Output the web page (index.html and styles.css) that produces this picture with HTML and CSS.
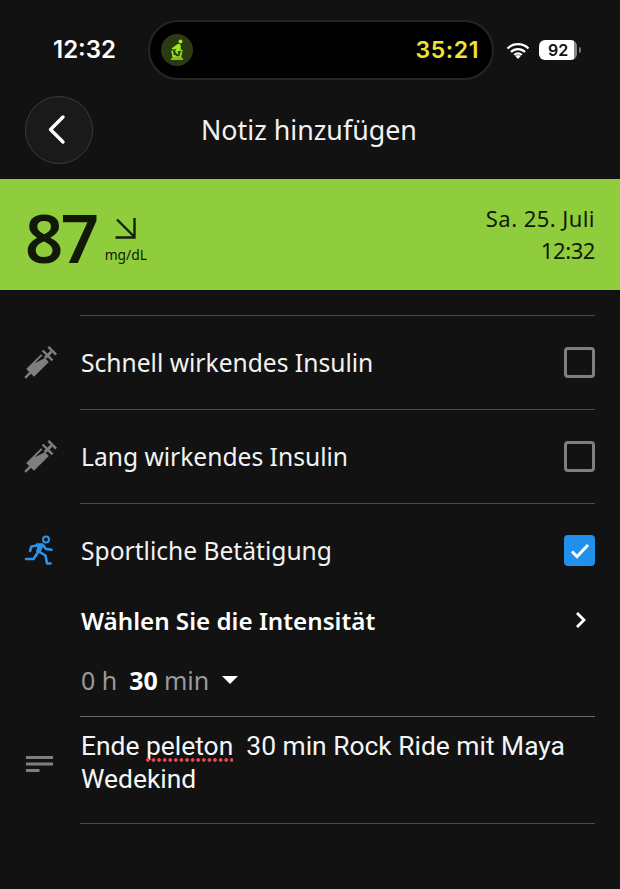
FILE: index.html
```html
<!DOCTYPE html>
<html lang="de">
<head>
<meta charset="utf-8">
<title>Notiz hinzufügen</title>
<link rel="stylesheet" href="styles.css">
</head>
<body>
<div class="status">
  <span class="clock">12:32</span>
  <div class="island">
    <span class="bike-badge">
      <svg width="18" height="22" viewBox="0 0 18 22"><circle cx="12.500" cy="2.500" r="2" fill="#9bea20"/><path d="M3.500 9.500L9 5.500c2-1 3.700-.5 3.700 1.500v3.500l2 .8v1.500l-4-1-1.200 1.500 1.500 2H9.300L7 12.300l1.500-2.500-3 1z" fill="#9bea20"/><path d="M4 11.500l1.500 6.500M13.500 13l-1.500 5M7 16v2M3 20h12" fill="none" stroke="#9bea20" stroke-width="1.600"/><path d="M4.500 18h9" stroke="#9bea20" stroke-width="1.500"/></svg>
    </span>
    <span class="timer">35:21</span>
  </div>
  <div class="status-icons">
    <svg width="24" height="17" viewBox="0 0 24 17"><path d="M1.500 6.500a15 15 0 0 1 21 0M5 10a10 10 0 0 1 14 0M8.300 13a5 5 0 0 1 7.400 0" fill="none" stroke="#fff" stroke-width="2.300"/><path d="M12 17l-2.600-2.800a3.500 3.500 0 0 1 5.200 0z" fill="#fff"/></svg>
    <span class="battery">92</span>
    <span class="battery-tip"></span>
  </div>
</div>

<header class="nav">
  <span class="back">
    <svg width="20" height="32" viewBox="0 0 20 32"><path d="M16 3L3.500 15.500 16 28" fill="none" stroke="#fff" stroke-width="3.400" stroke-linecap="round" stroke-linejoin="round"/></svg>
  </span>
  <h1 class="title">Notiz hinzufügen</h1>
</header>

<section class="glucose">
  <span class="value">87</span>
  <div class="trend">
    <svg width="24" height="24" viewBox="0 0 24 24"><path d="M3 3.500L20 20.500M20.500 2v19.500H1.500" fill="none" stroke="#14200a" stroke-width="2.400"/></svg>
    <span class="unit">mg/dL</span>
  </div>
  <div class="date">
    <span class="date-day">Sa. 25. Juli</span>
    <span class="date-time">12:32</span>
  </div>
</section>

<main class="list">
  <div class="row row-first">
    <span class="icon">
      <svg class="syringe" viewBox="-5 -5 42 42"><g transform="rotate(-45 16 16)"><rect x="-5" y="14.800" width="8" height="2.400" fill="#7f7f7f"/><path d="M2 10.500h21v11H2z" fill="#7f7f7f"/><path d="M12 12.500h11V16z" fill="#121212"/><rect x="23" y="14.500" width="9" height="3" fill="#7f7f7f"/><rect x="25.500" y="9" width="2.400" height="14" fill="#7f7f7f"/><rect x="32" y="10.500" width="2.600" height="11" fill="#7f7f7f"/></g></svg>
    </span>
    <span class="label">Schnell wirkendes Insulin</span>
    <span class="check"></span>
  </div>
  <div class="row">
    <span class="icon">
      <svg class="syringe" viewBox="-5 -5 42 42"><g transform="rotate(-45 16 16)"><rect x="-5" y="14.800" width="8" height="2.400" fill="#7f7f7f"/><path d="M2 10.500h21v11H2z" fill="#7f7f7f"/><path d="M12 12.500h11V16z" fill="#121212"/><rect x="23" y="14.500" width="9" height="3" fill="#7f7f7f"/><rect x="25.500" y="9" width="2.400" height="14" fill="#7f7f7f"/><rect x="32" y="10.500" width="2.600" height="11" fill="#7f7f7f"/></g></svg>
    </span>
    <span class="label">Lang wirkendes Insulin</span>
    <span class="check"></span>
  </div>
  <div class="row">
    <span class="icon">
      <svg class="runner" viewBox="0 0 32 32"><circle cx="22" cy="4.500" r="3" fill="none" stroke="#2b93ea" stroke-width="2"/><path d="M2 24h7.500l4-6M13 10.500l-5.500 1-1.500 4.500M13 9.500h5.500L15.500 17l6 3.500 1.500 8h3.500M19 10l3 4 5.500.8" fill="none" stroke="#2b93ea" stroke-width="2.600" stroke-linejoin="round" stroke-linecap="round"/><path d="M13.500 10h5l-3.500 8-3-1z" fill="#2b93ea"/></svg>
    </span>
    <span class="label">Sportliche Betätigung</span>
    <span class="check checked">
      <svg width="22" height="18" viewBox="0 0 22 18"><path d="M3 9.500l5 5L19 3" fill="none" stroke="#fff" stroke-width="3"/></svg>
    </span>
  </div>
  <div class="intensity">
    <span>Wählen Sie die Intensität</span>
    <svg width="12" height="18" viewBox="0 0 12 18"><path d="M2 2l7 7-7 7" fill="none" stroke="#fff" stroke-width="2.800"/></svg>
  </div>
  <div class="duration">
    <span class="dim">0 h</span>
    <span class="bold">30</span>
    <span class="dim mins">min</span>
    <span class="caret"></span>
  </div>
  <div class="note">
    <span class="icon note-icon">
      <svg width="28" height="16" viewBox="0 0 28 16"><path d="M0 1.500h27M0 8h27M0 14.500h13.500" stroke="#7f7f7f" stroke-width="2.800" fill="none"/></svg>
    </span>
    <p class="note-text">Ende <span class="typo">peleton</span>&nbsp; 30 min Rock Ride mit Maya Wedekind</p>
  </div>
</main>
</body>
</html>
```
FILE: styles.css
```css
* { box-sizing: border-box; }
html, body { margin: 0; padding: 0; }
body {
  width: 620px;
  height: 889px;
  overflow: hidden;
  background: #121212;
  color: #fff;
  font-family: "Noto Sans", sans-serif;
}
.status {
  height: 92px;
  padding: 20px 0 0 53px;
  display: flex;
  align-items: flex-start;
}
.clock {
  width: 95px;
  font: 600 24px/60px Inter, sans-serif;
}
.island {
  width: 346px;
  height: 60px;
  border: 2px solid #252525;
  border-radius: 30px;
  background: #000;
  display: flex;
  align-items: center;
  justify-content: space-between;
  padding: 0 13px 0 11px;
}
.bike-badge {
  width: 32px;
  height: 32px;
  border-radius: 50%;
  background: #2c3a12;
  display: flex;
  align-items: center;
  justify-content: center;
}
.timer {
  font: 600 23px Inter, sans-serif;
  color: #f2e230;
  letter-spacing: .6px;
}
.status-icons {
  display: flex;
  align-items: center;
  height: 60px;
  margin-left: 12px;
}
.battery {
  width: 38px;
  height: 20px;
  margin-left: 9px;
  border-radius: 6px;
  background: linear-gradient(90deg, #fff 92%, #888 92%);
  color: #111;
  font: 600 16px/20px Inter, sans-serif;
  text-align: center;
}
.battery-tip {
  width: 2px;
  height: 6px;
  margin-left: 2px;
  background: #777;
  border-radius: 0 2px 2px 0;
}
.nav {
  height: 87px;
  padding-left: 25px;
  display: flex;
  align-items: flex-start;
}
.back {
  width: 68px;
  height: 68px;
  margin-top: 4px;
  border-radius: 50%;
  border: 1px solid #3a3a3a;
  background: #1a1a1a;
  display: flex;
  align-items: center;
  justify-content: center;
  padding-right: 4px;
}
.title {
  margin: 17px 0 0 108px;
  font-size: 26.800px;
  line-height: 42px;
  font-weight: 400;
  color: #f2f2f2;
}
.glucose {
  height: 111px;
  background: #90cd3c;
  color: #111a08;
  display: flex;
  align-items: flex-start;
  padding: 0 25px;
}
.value {
  font-size: 67px;
  font-weight: 600;
  line-height: 116px;
  letter-spacing: -2.500px;
}
.trend {
  display: flex;
  flex-direction: column;
  margin-left: 8px;
  padding-top: 37px;
  align-items: flex-start;
}
.trend svg { margin-left: 9px; }
.unit {
  font-size: 13.800px;
  line-height: 20px;
  margin-top: 5px;
}
.date {
  margin-left: auto;
  display: flex;
  flex-direction: column;
  align-items: flex-end;
  padding-top: 23px;
  font-size: 22px;
  line-height: 32px;
}
.date-day { letter-spacing: .45px; }
.date-time { letter-spacing: -.4px; }
.list {
  margin: 25px 25px 0 25px;
  display: flex;
  flex-direction: column;
}
.row {
  height: 94px;
  display: flex;
  align-items: center;
  border-top: 1px solid #4a4a4a;
  margin-left: 55px;
  position: relative;
}
.icon {
  position: absolute;
  left: -55px;
  top: 0;
  bottom: 0;
  width: 30px;
  display: flex;
  align-items: center;
  justify-content: center;
}
.note-icon { bottom: 13px; }
.syringe { width: 42px; height: 42px; flex: none; }
.runner { width: 32px; height: 32px; flex: none; }
.label {
  font-size: 24.600px;
  color: #f2f2f2;
  padding-left: 1px;
}
.check {
  margin-left: auto;
  width: 31px;
  height: 31px;
  border: 3px solid #7f7f7f;
  border-radius: 4px;
  display: flex;
  align-items: center;
  justify-content: center;
}
.check.checked {
  background: #2090ec;
  border-color: #2090ec;
}
.intensity {
  margin-left: 55px;
  height: 46px;
  display: flex;
  align-items: center;
  justify-content: space-between;
  font-size: 24.200px;
  font-weight: 600;
  padding-left: 1px;
  padding-right: 8px;
}
.duration {
  margin-left: 55px;
  height: 73px;
  display: flex;
  align-items: center;
  font-size: 25px;
  gap: 12px;
  padding-left: 1px;
}
.dim { color: #999; }
.bold { font-weight: 700; color: #fff; }
.mins { margin-left: -6px; }
.caret {
  margin-left: 1px;
  width: 0;
  height: 0;
  border-left: 8px solid transparent;
  border-right: 8px solid transparent;
  border-top: 8px solid #fff;
}
.note {
  margin-left: 55px;
  height: 108px;
  border-top: 1px solid #6a6a6a;
  border-bottom: 1px solid #4a4a4a;
  position: relative;
}
.note-text {
  margin: 13px 0 0 0;
  padding-left: 1px;
  font: 400 26.400px/33px Roboto, sans-serif;
  color: #f5f5f5;
}
.typo { position: relative; }
.typo::after {
  content: "";
  position: absolute;
  left: 0;
  right: 0;
  bottom: -1px;
  height: 4px;
  background: radial-gradient(circle at 2px 2px, #e8424c 1.700px, transparent 2px) 0 0 / 5.600px 4px repeat-x;
}
```
